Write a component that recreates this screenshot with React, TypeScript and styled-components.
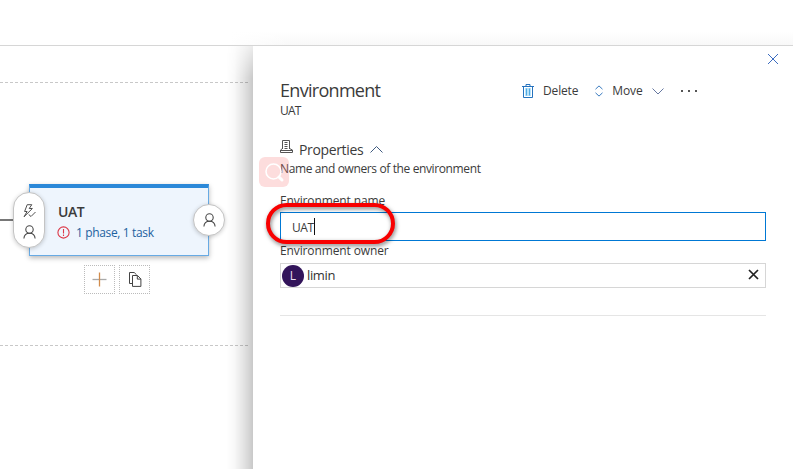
import React from "react";
import styled, { createGlobalStyle } from "styled-components";

const GlobalStyle = createGlobalStyle`
  *, *::before, *::after { box-sizing: border-box; }
  body { margin: 0; background: #fff; overflow: hidden; font-family: "Open Sans", "Noto Sans", sans-serif; }
  svg { display: block; flex: none; }
  button { font: inherit; color: inherit; background: none; border: 0; padding: 0; }
`;

const Page = styled.div`
  position: relative;
  width: 793px;
  height: 469px;
  display: flex;
  flex-direction: column;
  overflow: hidden;
  background: #fff;
`;

const TopBar = styled.header`
  height: 46px;
  flex: none;
  border-bottom: 1px solid #d6d6d6;
  background: linear-gradient(to right, #fff 230px, rgba(255, 255, 255, 0) 290px),
    linear-gradient(to bottom, #fff 32px, #f8f8f8 45px);
`;

const Workspace = styled.main`
  display: flex;
  flex: 1;
  min-height: 0;
`;

const Canvas = styled.section`
  position: relative;
  width: 253px;
  flex: none;
  overflow: hidden;
`;

const Lane = styled.div`
  position: absolute;
  top: 36px;
  left: 0;
  width: 248px;
  height: 264px;
`;

const PanelShade = styled.div`
  position: absolute;
  top: 0;
  right: 0;
  width: 27px;
  height: 423px;
  background: linear-gradient(to right, transparent, rgba(0, 0, 0, 0.025) 30%, rgba(0, 0, 0, 0.12) 70%, rgba(0, 0, 0, 0.21));
  mask-image: linear-gradient(to bottom, rgba(0, 0, 0, 0.35), #000 32px);
`;

const Connector = styled.div`
  position: absolute;
  top: 173px;
  left: 0;
  width: 14px;
  height: 2px;
  background: #777;
`;

const Node = styled.article`
  position: absolute;
  left: 29px;
  top: 138px;
  width: 180px;
  height: 72px;
  padding: 15px 0 0 28px;
  border: 1px solid #67aae4;
  border-top: 4px solid #2b88d8;
  background: #eef5fd;
  box-shadow: 0 2px 5px rgba(0, 0, 0, 0.28);
`;

const NodeTasks = styled.div`
  display: flex;
  align-items: center;
  gap: 6px;
  height: 20px;
  margin-top: 2px;
  margin-left: -1px;
`;

const AlertIcon = styled.svg`
  margin-top: -2px;
`;

const ConditionPill = styled.div`
  position: absolute;
  left: 13px;
  top: 146px;
  width: 32px;
  height: 56px;
  border: 1px solid #c4c4c4;
  border-radius: 16px;
  background: #fff;
  box-shadow: 0 1px 4px rgba(0, 0, 0, 0.2);
  display: flex;
  flex-direction: column;
  align-items: center;
  padding-top: 11px;
  gap: 7px;
`;

const ApprovalCircle = styled.div`
  position: absolute;
  left: 193px;
  top: 158px;
  width: 32px;
  height: 32px;
  border: 1px solid #c4c4c4;
  border-radius: 50%;
  background: #fff;
  box-shadow: 0 1px 4px rgba(0, 0, 0, 0.2);
  display: grid;
  place-items: center;
`;

const NodeActions = styled.div`
  position: absolute;
  left: 84px;
  top: 219px;
  display: flex;
  gap: 4px;
`;

const DottedButton = styled.button`
  width: 31px;
  height: 29px;
  border: 1px dotted #bbb;
  display: grid;
  place-items: center;
`;

const Panel = styled.aside`
  flex: 1;
  background: #fff;
  padding: 7px 27px 0 27px;
  display: flex;
  flex-direction: column;
`;

const CloseRow = styled.div`
  display: flex;
  justify-content: flex-end;
  height: 12px;
  margin-right: -13px;
`;

const PanelHeader = styled.div`
  display: flex;
  height: 66px;
  padding-top: 12px;
`;

const TitleGroup = styled.div`
  width: 242px;
  padding-top: 1px;
`;

const Commands = styled.div`
  display: flex;
  align-items: center;
  height: 28px;
`;

const Label = styled.div<{ $size?: number; $track?: number; $line?: number; $color?: string; $weight?: number }>`
  font-size: ${(p) => p.$size ?? 12}px;
  letter-spacing: ${(p) => p.$track ?? 0}px;
  line-height: ${(p) => p.$line ?? 18}px;
  color: ${(p) => p.$color ?? "#3b3b3b"};
  font-weight: ${(p) => p.$weight ?? 400};
  white-space: nowrap;
`;

const CommandButton = styled.button<{ $gap: number; $after: number }>`
  display: flex;
  align-items: center;
  gap: ${(p) => p.$gap}px;
  margin-right: ${(p) => p.$after}px;
`;

const SectionHeading = styled.div`
  display: flex;
  align-items: center;
  height: 24px;
  margin-top: 7px;
  margin-bottom: -1px;
`;

const PropertiesIcon = styled.svg`
  margin: -7px 6px 0 0;
`;

const ChevronUp = styled.svg`
  margin: -2px 0 0 7px;
`;

const FieldLabel = styled.label<{ $top: number }>`
  display: block;
  margin-top: ${(p) => p.$top}px;
  font-size: 12px;
  line-height: 16px;
  letter-spacing: -0.12px;
  color: #3b3b3b;
`;

const Watermark = styled.div`
  position: absolute;
  left: 259px;
  top: 157px;
  width: 30px;
  height: 30px;
  border-radius: 6px;
  background: rgba(248, 120, 120, 0.25);
`;

const NameField = styled.div`
  position: relative;
  height: 29px;
  margin-top: 3px;
  border: 1px solid #0078d4;
  padding: 2px 11px 0;
  display: flex;
  align-items: center;
`;

const Caret = styled.span`
  width: 1px;
  height: 17px;
  margin-top: -2px;
  background: #111;
`;

const Highlight = styled.div`
  position: absolute;
  left: -15px;
  top: -10px;
  width: 129px;
  height: 41px;
  border: 4px solid #f80000;
  border-radius: 21px;
  filter: drop-shadow(1px 2px 2px rgba(0, 0, 0, 0.5));
`;

const OwnerField = styled.div`
  height: 25px;
  margin-top: 4px;
  border: 1px solid #d6d6d6;
  padding: 0 6px 0 1px;
  display: flex;
  align-items: center;
  gap: 4px;
`;

const OwnerName = styled.span`
  margin: -2px 0 0 -1px;
  font-size: 13px;
  letter-spacing: -0.35px;
  color: #333;
`;

const Avatar = styled.div`
  width: 22px;
  height: 22px;
  border-radius: 50%;
  background: #32145a;
  color: #e7deef;
  font-size: 12px;
  display: grid;
  place-items: center;
`;

const ClearIcon = styled.svg`
  margin: -2px 0 0 auto;
`;

const Divider = styled.div`
  height: 1px;
  margin-top: 27px;
  background: #e5e5e5;
`;

const PersonIcon = () => (
  <svg width="13" height="14" viewBox="0 0 13 14" fill="none" stroke="#484848" strokeWidth="1.1">
    <circle cx="6.5" cy="4.5" r="3.7" />
    <path d="M.9 13.5C1.1 10.2 3.5 8.2 6.5 8.2s5.4 2 5.6 5.3" />
  </svg>
);

const TriggerIcon = () => (
  <svg width="13" height="14" viewBox="0 0 13 14" fill="none" stroke="#505050" strokeWidth="1">
    <path d="M4.2.7h4.6L6.2 4.5h3.2L1 12.8 4.1 7.5H1.6z" />
    <path d="M5.7 10.5l2.3 2 4.5-4.5" />
  </svg>
);

export default function App() {
  return (
    <>
      <GlobalStyle />
      <Page>
        <TopBar />
        <Workspace>
          <Canvas>
            <Lane>
              <svg width="248" height="264" fill="none" stroke="#c8c8c8" strokeDasharray="3 2">
                <path d="M0 .5h248M0 263.5h248" />
              </svg>
            </Lane>
            <PanelShade />
            <Connector />
            <Node>
              <Label $size={14} $weight={600} $track={-0.45} $line={18}>UAT</Label>
              <NodeTasks>
                <AlertIcon width="13" height="13" viewBox="0 0 13 13" fill="none" stroke="#dc3848" strokeWidth="1.1">
                  <circle cx="6.5" cy="6.5" r="5.6" />
                  <path d="M6.5 3v4.4M6.5 8.6v1.3" />
                </AlertIcon>
                <Label $color="#1d629f" $track={-0.36}>1 phase, 1 task</Label>
              </NodeTasks>
            </Node>
            <ConditionPill>
              <TriggerIcon />
              <PersonIcon />
            </ConditionPill>
            <ApprovalCircle>
              <PersonIcon />
            </ApprovalCircle>
            <NodeActions>
              <DottedButton aria-label="Add">
                <svg width="15" height="15" fill="none">
                  <path d="M.5 7.5h14" stroke="#aaa" strokeWidth="1.3" />
                  <path d="M7.5.5v14" stroke="#d28c4c" strokeWidth="1.3" />
                </svg>
              </DottedButton>
              <DottedButton aria-label="Clone">
                <svg width="14" height="15" viewBox="0 0 14 15" fill="none" stroke="#444" strokeWidth="1">
                  <path d="M4 11.5H1.5v-11h4.7l2.4 2.4" />
                  <path d="M4.5 3.5h5l3.4 3.4v7.5H4.5zM9.3 3.5v3.6h3.6" />
                </svg>
              </DottedButton>
            </NodeActions>
          </Canvas>
          <Panel>
            <CloseRow>
              <svg width="12" height="12" fill="none" stroke="#3b6cc0">
                <path d="M1 1l10 10M11 1L1 11" />
              </svg>
            </CloseRow>
            <PanelHeader>
              <TitleGroup>
                <Label $size={18} $track={-0.7} $line={24}>Environment</Label>
                <Label $track={-0.75} $line={18}>UAT</Label>
              </TitleGroup>
              <Commands>
                <CommandButton $gap={9} $after={17}>
                  <svg width="12" height="14" viewBox="0 0 12 14" fill="none" stroke="#2673be" strokeWidth="1">
                    <path d="M3 4h6v8H3z" fill="#b7e3fb" stroke="none" />
                    <path d="M0 2.5h12M4 2.5v-2h4v2M1.5 2.5v11h9v-11" />
                    <path d="M4.5 4.5v7M7.5 4.5v7" stroke="#53a9df" />
                  </svg>
                  <Label $track={-0.16}>Delete</Label>
                </CommandButton>
                <CommandButton $gap={9} $after={17}>
                  <svg width="8" height="12" viewBox="0 0 8 12" fill="none" stroke="#397abf" strokeWidth="1">
                    <path d="M.5 4.2L4 .9l3.5 3.3M.5 7.8L4 11.1l3.5-3.3" />
                  </svg>
                  <Label $track={-0.1}>Move</Label>
                  <svg width="12" height="7" fill="none" stroke="#6577a0">
                    <path d="M.5.5L6 6 11.5.5" />
                  </svg>
                </CommandButton>
                <svg width="16" height="2" fill="#555">
                  <path d="M0 0h2v2H0zM7 0h2v2H7zM14 0h2v2h-2z" />
                </svg>
              </Commands>
            </PanelHeader>
            <SectionHeading>
              <PropertiesIcon width="13" height="13" viewBox="0 0 13 13" fill="none" stroke="#555">
                <path d="M2.5 9V.5h7V9M4.5 2.5h3M4.5 4.5h3M4.5 6.5h3M4.5 8.5h3M2.5 8.5L.5 10v2.5h12V10l-3-1.5M.5 10.5h12" />
              </PropertiesIcon>
              <Label $size={14} $track={-0.35} $line={20}>Properties</Label>
              <ChevronUp width="13" height="7" fill="none" stroke="#405b80">
                <path d="M.5 6.5l6-6 6 6" />
              </ChevronUp>
            </SectionHeading>
            <Label $track={-0.38} $line={16}>Name and owners of the environment</Label>
            <FieldLabel $top={16}>Environment name</FieldLabel>
            <NameField>
              <Label $track={-0.4}>UAT</Label>
              <Caret />
              <Highlight />
            </NameField>
            <FieldLabel $top={2}>Environment owner</FieldLabel>
            <OwnerField>
              <Avatar>L</Avatar>
              <OwnerName>limin</OwnerName>
              <ClearIcon width="11" height="11" fill="none" stroke="#222" strokeWidth="1.7">
                <path d="M1 1l9 9M10 1l-9 9" />
              </ClearIcon>
            </OwnerField>
            <Divider />
          </Panel>
        </Workspace>
        <Watermark>
          <svg width="30" height="30" fill="none" stroke="#fff" strokeWidth="1.6">
            <circle cx="14.5" cy="14.5" r="7.5" />
            <path d="M20 20l3 3" strokeWidth="3" strokeLinecap="round" />
          </svg>
        </Watermark>
      </Page>
    </>
  );
}
